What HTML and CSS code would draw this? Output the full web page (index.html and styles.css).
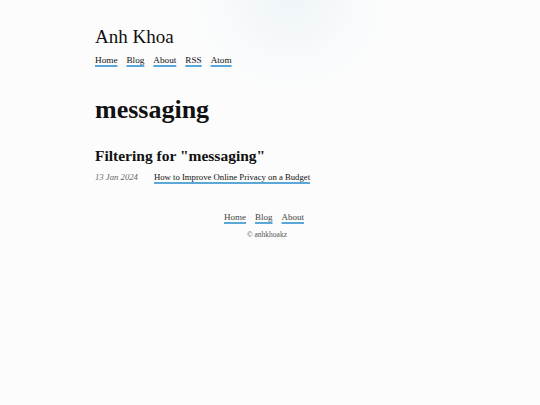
FILE: index.html
```html
<!DOCTYPE html>
<html>
<head>
<meta charset="utf-8">
<link rel="stylesheet" href="styles.css">
</head>
<body>
<div class="glow"></div>
<div class="page">
  <header class="site-header">
    <div class="site-title">Anh Khoa</div>
    <nav class="nav">
      <a href="#">Home</a>
      <a href="#">Blog</a>
      <a href="#">About</a>
      <a href="#">RSS</a>
      <a href="#">Atom</a>
    </nav>
  </header>
  <main>
    <h1 class="tag-title">messaging</h1>
    <h2 class="filter-title">Filtering for "messaging"</h2>
    <ul class="posts">
      <li class="post">
        <span class="date">13 Jan 2024</span>
        <a href="#">How to Improve Online Privacy on a Budget</a>
      </li>
    </ul>
  </main>
  <footer class="footer">
    <nav class="footer-nav">
      <a href="#">Home</a>
      <a href="#">Blog</a>
      <a href="#">About</a>
    </nav>
    <div class="copy">© anhkhoakz</div>
  </footer>
</div>
</body>
</html>
```
FILE: styles.css
```css
html, body {
  margin: 0;
  padding: 0;
}
body {
  background: #fcfcfc;
  color: #111;
  font-family: "Liberation Serif", serif;
  min-height: 405px;
  position: relative;
  overflow: hidden;
}
.glow {
  position: absolute;
  left: 170px;
  top: -110px;
  width: 240px;
  height: 220px;
  border-radius: 50%;
  background: radial-gradient(closest-side, rgba(230,240,246,0.6), rgba(242,247,250,0.3) 60%, rgba(252,252,252,0));
  pointer-events: none;
}
.page {
  position: relative;
  width: 350px;
  margin: 0 auto;
  padding-top: 26px;
}
.site-title {
  font-size: 19px;
  line-height: 22px;
}
a {
  color: #111;
  text-decoration: underline;
  text-decoration-color: #5aa8d8;
  text-decoration-thickness: 2px;
  text-underline-offset: 2px;
  text-decoration-skip-ink: auto;
}
.nav {
  display: flex;
  gap: 9px;
  margin-top: 7px;
  font-size: 9.2px;
  line-height: 11px;
}
.tag-title {
  font-size: 26px;
  font-weight: bold;
  margin: 30px 0 0;
  line-height: 28px;
}
.filter-title {
  font-size: 15.5px;
  font-weight: bold;
  margin: 22px 0 0;
  line-height: 19px;
}
.posts {
  list-style: none;
  margin: 7px 0 0;
  padding: 0;
}
.post {
  display: flex;
  gap: 16px;
  font-size: 8.7px;
  line-height: 11px;
}
.date {
  font-style: italic;
  color: #666;
  white-space: nowrap;
}
.footer {
  margin-top: 29px;
  text-align: center;
  padding-right: 6px;
}
.footer-nav {
  display: flex;
  justify-content: center;
  gap: 9px;
  font-size: 9px;
  line-height: 11px;
  padding-right: 6px;
}
.footer-nav a {
  color: #444;
}
.copy {
  font-size: 7.5px;
  color: #555;
  margin-top: 7px;
}
```
